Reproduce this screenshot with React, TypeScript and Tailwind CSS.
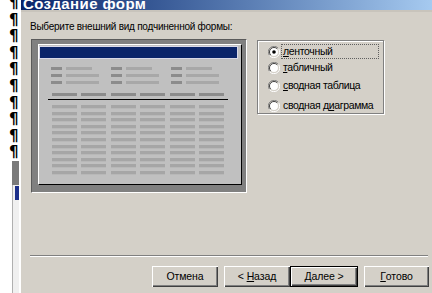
import React from "react";

const font = { fontFamily: '"Liberation Sans", Arial, sans-serif' };

function Radio({ checked }: { checked?: boolean }) {
  return (
    <svg width="12" height="12" viewBox="0 0 12 12" className="shrink-0">
      <path d="M10.5 2.5 A5.5 5.5 0 0 0 1.5 9.5" fill="none" stroke="#808080" strokeWidth="1" />
      <path d="M1.5 9.5 A5.5 5.5 0 0 0 10.5 2.5" fill="none" stroke="#ffffff" strokeWidth="1" />
      <circle cx="6" cy="6" r="4.5" fill="#ffffff" />
      <path d="M9.2 2.8 A4.5 4.5 0 0 0 2.8 9.2" fill="none" stroke="#404040" strokeWidth="1" />
      <path d="M2.8 9.2 A4.5 4.5 0 0 0 9.2 2.8" fill="none" stroke="#d4d0c8" strokeWidth="1" />
      {checked && <circle cx="6" cy="6" r="1.8" fill="#000" />}
    </svg>
  );
}

function Btn({ w, def, children }: { w: string; def?: boolean; children: React.ReactNode }) {
  return (
    <div
      className={`${w} h-[21px] flex items-center justify-center text-[10.5px] tracking-[-0.1px] whitespace-pre text-black bg-[#d4d0c8] ${
        def
          ? "border border-black shadow-[inset_1px_1px_0_#ffffff,inset_-1px_-1px_0_#404040,inset_-2px_-2px_0_#808080]"
          : "shadow-[inset_1px_1px_0_#ffffff,inset_-1px_-1px_0_#404040,inset_-2px_-2px_0_#808080]"
      }`}
    >
      {children}
    </div>
  );
}

export default function App() {
  const cols = [0, 1, 2, 3, 4, 5];
  const rows = Array.from({ length: 11 }, (_, i) => i);
  const groups = [0, 1, 2];
  return (
    <div className="w-[432px] h-[293px] overflow-hidden flex bg-white" style={font}>
      {/* left strip */}
      <div className="w-[20px] h-full bg-white flex flex-col">
        <div className="flex flex-col -mt-[5px] pl-[9px]">
          {Array.from({ length: 10 }, (_, i) => (
            <div key={i} className="h-[16.6px] leading-[16.6px] text-[15px] font-bold text-black" style={{ fontFamily: '"DejaVu Sans", sans-serif' }}>
              ¶
            </div>
          ))}
        </div>
        <div className="ml-[12px] w-[7px] h-[24px] bg-[#7a7a7a]" />
        <div className="ml-[12px] w-[7px] flex-1 border-l border-[#b0b0b0] bg-[#f0f0f0] pt-[1px]">
          <div className="ml-[2px] w-[4px] h-[14px] bg-[#1c2f8a]" />
        </div>
      </div>
      {/* dialog */}
      <div className="flex-1 h-full bg-[#d4d0c8] border-l border-white flex flex-col">
        <div className="h-[10px] overflow-hidden bg-gradient-to-r from-[#0a246a] to-[#a6caf0] pl-[2px]">
          <div className="text-[15px] leading-[15px] font-bold tracking-[0.4px] text-white -mt-[4px] whitespace-nowrap">Создание форм</div>
        </div>
        <div className="h-[2px] bg-[#c8c4bc]" />
        <div className="pl-[9px] pt-[8px] text-[10px] leading-[13px] tracking-[-0.25px] text-black whitespace-nowrap">
          Выберите внешний вид подчиненной формы:
        </div>
        <div className="flex items-start pl-[10px] mt-[6px]">
          {/* preview */}
          <div className="w-[216px] h-[154px] bg-[#808080] border border-t-[#5a5a5a] border-l-[#5a5a5a] border-b-white border-r-white pt-[4px] pl-[6px]">
            <div className="w-[204px] h-[141px] bg-[#c0c0c0] border border-t-white border-l-white border-b-black border-r-black flex flex-col">
              <div className="mt-[1px] w-[199px] h-[13px] bg-[#0a246a] border border-[#d8d8e8]" />
              <div className="flex mt-[8px] ml-[12px] gap-[12px]">
                {groups.map((g) => (
                  <div key={g} className="flex flex-col gap-[4px]">
                    {[26, 33, 33].map((vw, r) => (
                      <div key={r} className="flex gap-[4px]">
                        <div className="w-[11px] h-[3px] bg-[#8c8c8c]" />
                        <div className="h-[3px] bg-[#a8a8a8]" style={{ width: vw }} />
                      </div>
                    ))}
                  </div>
                ))}
              </div>
              <div className="flex mt-[9px] ml-[13px] gap-[4.4px]">
                {cols.map((c) => (
                  <div key={c} className="w-[25px] h-[3px] bg-[#8c8c8c]" />
                ))}
              </div>
              <div className="mt-[3px] ml-[9px] w-[180px] h-[1px] bg-black" />
              <div className="flex flex-col mt-[5px] ml-[13px] gap-[2.6px]">
                {rows.map((r) => (
                  <div key={r} className="flex gap-[4.4px]">
                    {cols.map((c) => (
                      <div key={c} className="w-[25px] h-[4px] bg-[#a6a6a6] border-b border-[#b8b8b8]" />
                    ))}
                  </div>
                ))}
              </div>
            </div>
          </div>
          {/* radio group */}
          <div className="ml-[10px] mt-[1px] w-[127px] h-[74px] border border-[#808080] shadow-[inset_1px_1px_0_#ffffff,1px_1px_0_#ffffff] flex flex-col text-[10.5px] tracking-[-0.35px] leading-[13px] text-black whitespace-nowrap">
            <div className="flex items-center mt-[3px] ml-[10px]">
              <Radio checked />
              <div className="ml-[1px] w-[98px] h-[15px] border border-dotted border-[#606060] flex items-center pl-[1px]">
                <span><u>л</u>енточный</span>
              </div>
            </div>
            <div className="flex items-center mt-[2px] ml-[10px]">
              <Radio />
              <span className="ml-[3px]"><u>т</u>абличный</span>
            </div>
            <div className="flex items-center mt-[5px] ml-[10px]">
              <Radio />
              <span className="ml-[3px]"><u>с</u>водная таблица</span>
            </div>
            <div className="flex items-center mt-[7px] ml-[10px]">
              <Radio />
              <span className="ml-[3px]">сводная д<u>и</u>аграмма</span>
            </div>
          </div>
        </div>
        {/* separator */}
        <div className="mt-[62px] ml-[9px] w-[398px] h-[1px] bg-[#808080]" />
        <div className="ml-[9px] w-[398px] h-[1px] bg-white" />
        {/* buttons */}
        <div className="flex mt-[9px] ml-[131px]">
          <Btn w="w-[66px]">Отмена</Btn>
          <div className="w-[6px]" />
          <Btn w="w-[66px]">{"< "}<u>Н</u>азад</Btn>
          <Btn w="w-[68px]" def><u>Д</u>алее{" >"}</Btn>
          <div className="w-[6px]" />
          <Btn w="w-[65px]"><u>Г</u>отово</Btn>
        </div>
      </div>
    </div>
  );
}
